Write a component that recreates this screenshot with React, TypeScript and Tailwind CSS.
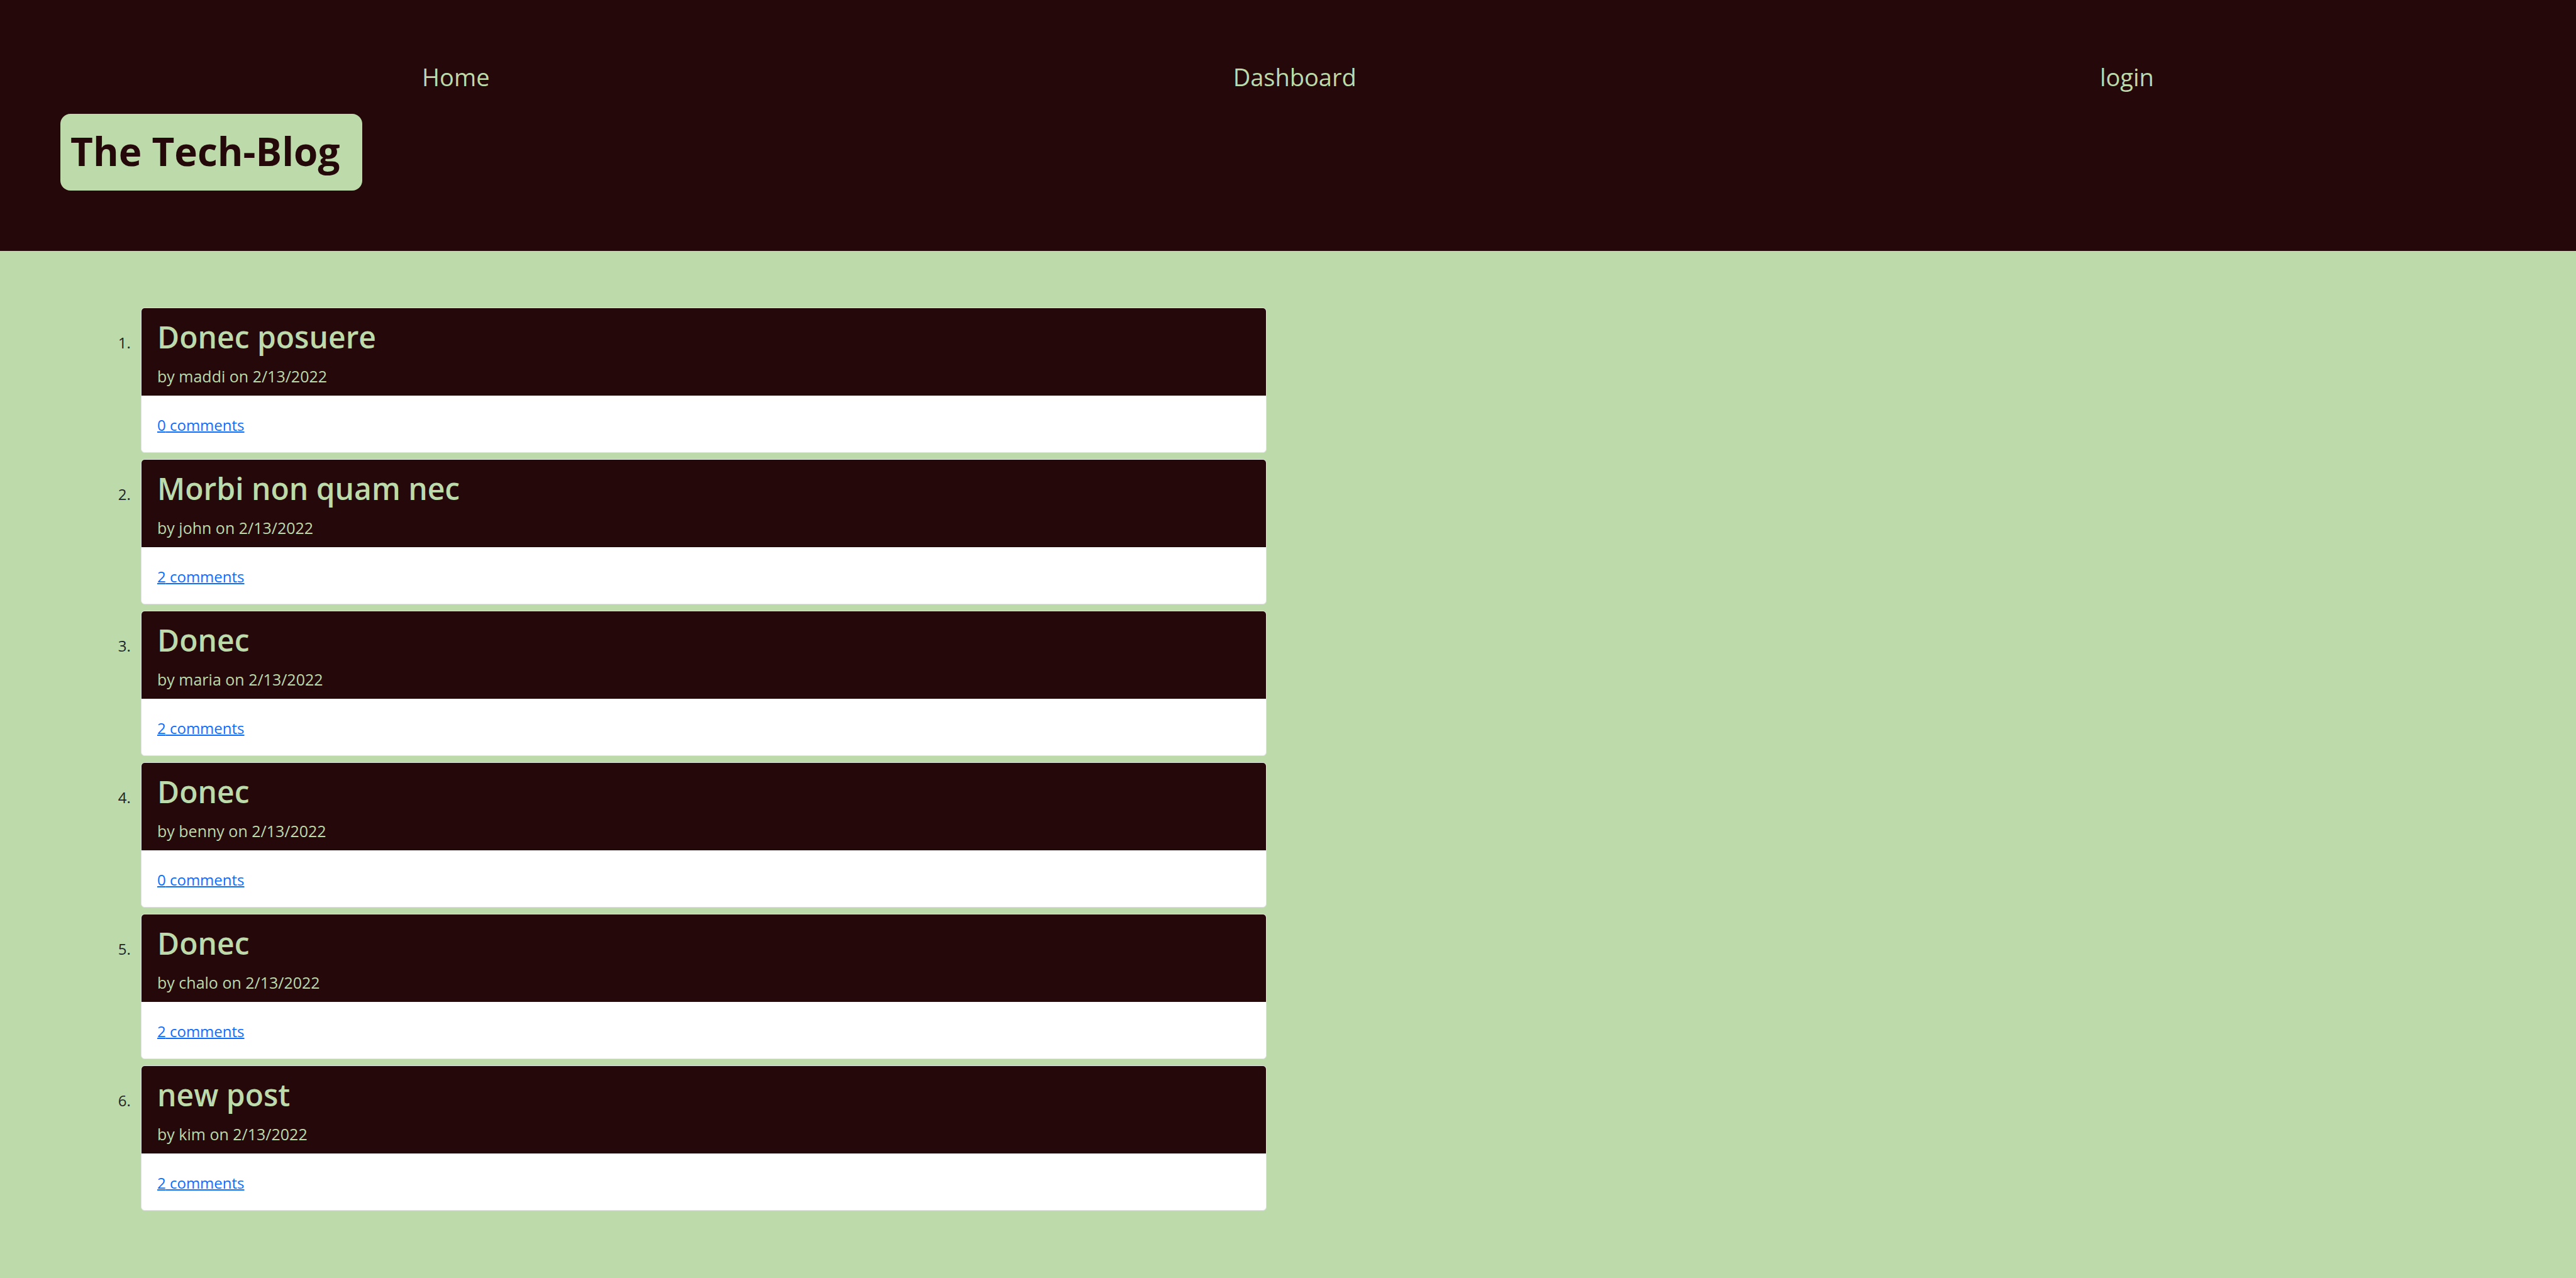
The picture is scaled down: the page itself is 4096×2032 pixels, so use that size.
const navLinks = ["Home", "Dashboard", "login"];

const posts = [
  { title: "Donec posuere", author: "maddi", date: "2/13/2022", comments: 0 },
  { title: "Morbi non quam nec", author: "john", date: "2/13/2022", comments: 2 },
  { title: "Donec", author: "maria", date: "2/13/2022", comments: 2 },
  { title: "Donec", author: "benny", date: "2/13/2022", comments: 0 },
  { title: "Donec", author: "chalo", date: "2/13/2022", comments: 2 },
  { title: "new post", author: "kim", date: "2/13/2022", comments: 2 },
];

type Post = (typeof posts)[number];

function Header() {
  return (
    <header className="bg-[#250809] px-20 pt-[92px] pb-24 text-[#bddaab]">
      <nav className="flex justify-around text-[38px] leading-[61px]">
        {navLinks.map((label) => (
          <a key={label} href="#">
            {label}
          </a>
        ))}
      </nav>
      <h1 className="mt-7 ml-4 w-[480px] rounded-2xl bg-[#bddaab] px-4 pb-1 text-[62px] leading-[118px] font-bold whitespace-nowrap text-[#250809]">
        The Tech-Blog
      </h1>
    </header>
  );
}

function PostCard({ post }: { post: Post }) {
  return (
    <article className="rounded-md border border-[#dfdfdf] bg-white">
      <div className="rounded-t-[5px] border-b border-[#1f0708] bg-[#250809] px-[25px] pt-[15px] pb-[11px] text-[#bddaab]">
        <h2 className="mb-[13px] text-[48px] leading-[61px] font-semibold">{post.title}</h2>
        <p className="text-[25px] leading-[38px]">
          by {post.author} on {post.date}
        </p>
      </div>
      <div className="px-[25px] pt-7 pb-6">
        <a href="#" className="block w-fit leading-[38px] text-[#0d6efd] underline decoration-2">
          {post.comments} comments
        </a>
      </div>
    </article>
  );
}

export default function App() {
  return (
    <div className="min-h-screen bg-[#bddaab] font-['Open_Sans','Noto_Sans',sans-serif] text-2xl text-[#212529]">
      <Header />
      <main className="w-1/2 pt-[90px] pr-[34px] pb-[90px] pl-[214px]">
        <ol className="flex list-outside list-decimal flex-col gap-[10px]">
          {posts.map((post, index) => (
            <li key={index} className="pl-[10px]">
              <PostCard post={post} />
            </li>
          ))}
        </ol>
      </main>
    </div>
  );
}
